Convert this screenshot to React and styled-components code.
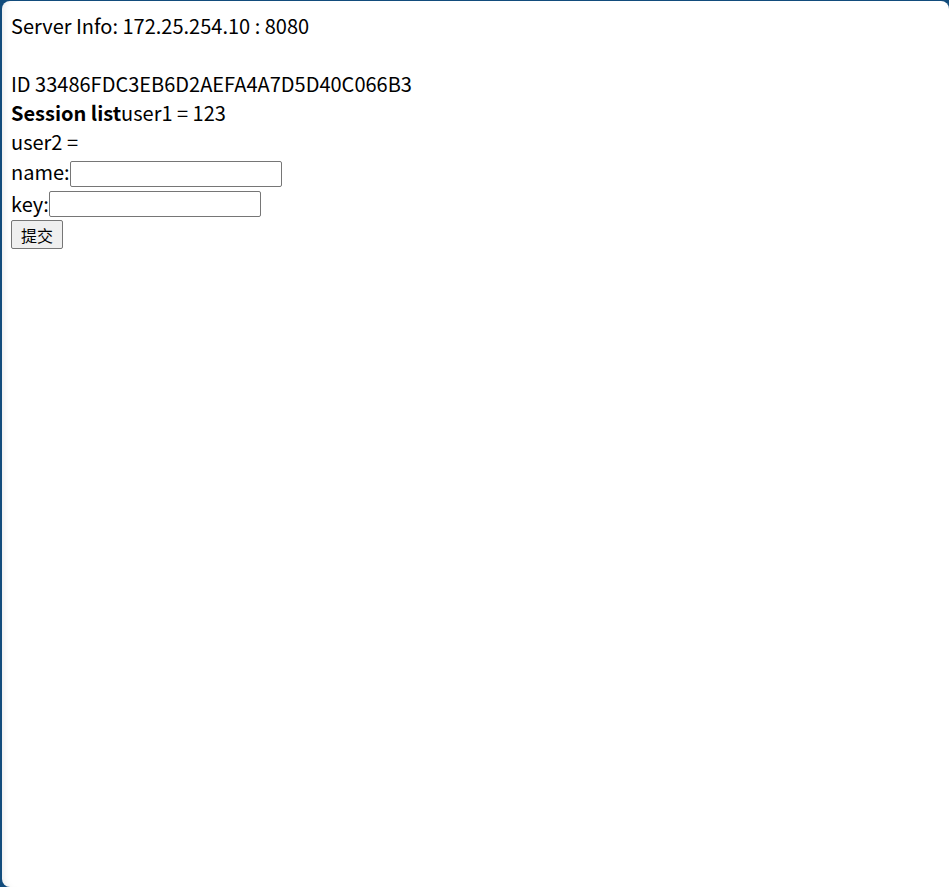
import React from "react";
import styled, { createGlobalStyle } from "styled-components";

const GlobalStyle = createGlobalStyle`
  html, body {
    margin: 0;
    padding: 0;
    height: 100%;
    background: #124c7c;
  }
  #root {
    height: 100%;
  }
`;

const Frame = styled.div`
  box-sizing: border-box;
  height: 100%;
  padding: 1px 0 0 2px;
  display: flex;
`;

const Page = styled.div`
  flex: 1;
  background: #ffffff;
  border-radius: 8px 8px 0 8px;
  box-shadow: inset 8px 0 8px -8px rgba(0, 0, 0, 0.12);
  padding: 10px 10px 10px 9px;
  font-family: "Noto Sans CJK SC", "Noto Sans", sans-serif;
  font-size: 20px;
  line-height: 29px;
  color: #000;
`;

const Line = styled.div`
  min-height: 29px;
  display: flex;
  align-items: flex-start;
  padding: ${(p) => p.$pad || "0"};
`;

const Strong = styled.b`
  font-weight: 700;
`;

const Form = styled.form`
  margin: 0;
`;

const TextInput = styled.input`
  box-sizing: border-box;
  width: 212px;
  height: 26px;
  margin: ${(p) => p.$top || 0}px 0 0;
  padding: 1px 3px;
  border: 1px solid #767676;
  border-radius: 2px;
  font-size: 16px;
  background: #fff;
`;

const Submit = styled.button`
  box-sizing: border-box;
  width: 52px;
  height: 29px;
  margin: 0;
  padding: 0 6px;
  border: 1px solid #767676;
  border-radius: 2px;
  background: #efefef;
  font-family: "Noto Sans CJK SC", sans-serif;
  font-size: 16px;
  line-height: 20px;
  color: #000;
`;

const App = () => {
  return (
    <>
      <GlobalStyle />
      <Frame>
        <Page>
          <Line>Server Info: 172.25.254.10 : 8080</Line>
          <Line />
          <Line>ID 33486FDC3EB6D2AEFA4A7D5D40C066B3</Line>
          <Line>
            <Strong>Session list</Strong>user1 = 123
          </Line>
          <Line>user2 =</Line>
          <Form onSubmit={(e) => e.preventDefault()}>
            <Line $pad="1px 0 1px">
              name:<TextInput type="text" $top={4} />
            </Line>
            <Line $pad="1px 0 0">
              key:<TextInput type="text" $top={2} />
            </Line>
            <Line $pad="2px 0 0">
              <Submit type="submit">提交</Submit>
            </Line>
          </Form>
        </Page>
      </Frame>
    </>
  );
};

export default App;
